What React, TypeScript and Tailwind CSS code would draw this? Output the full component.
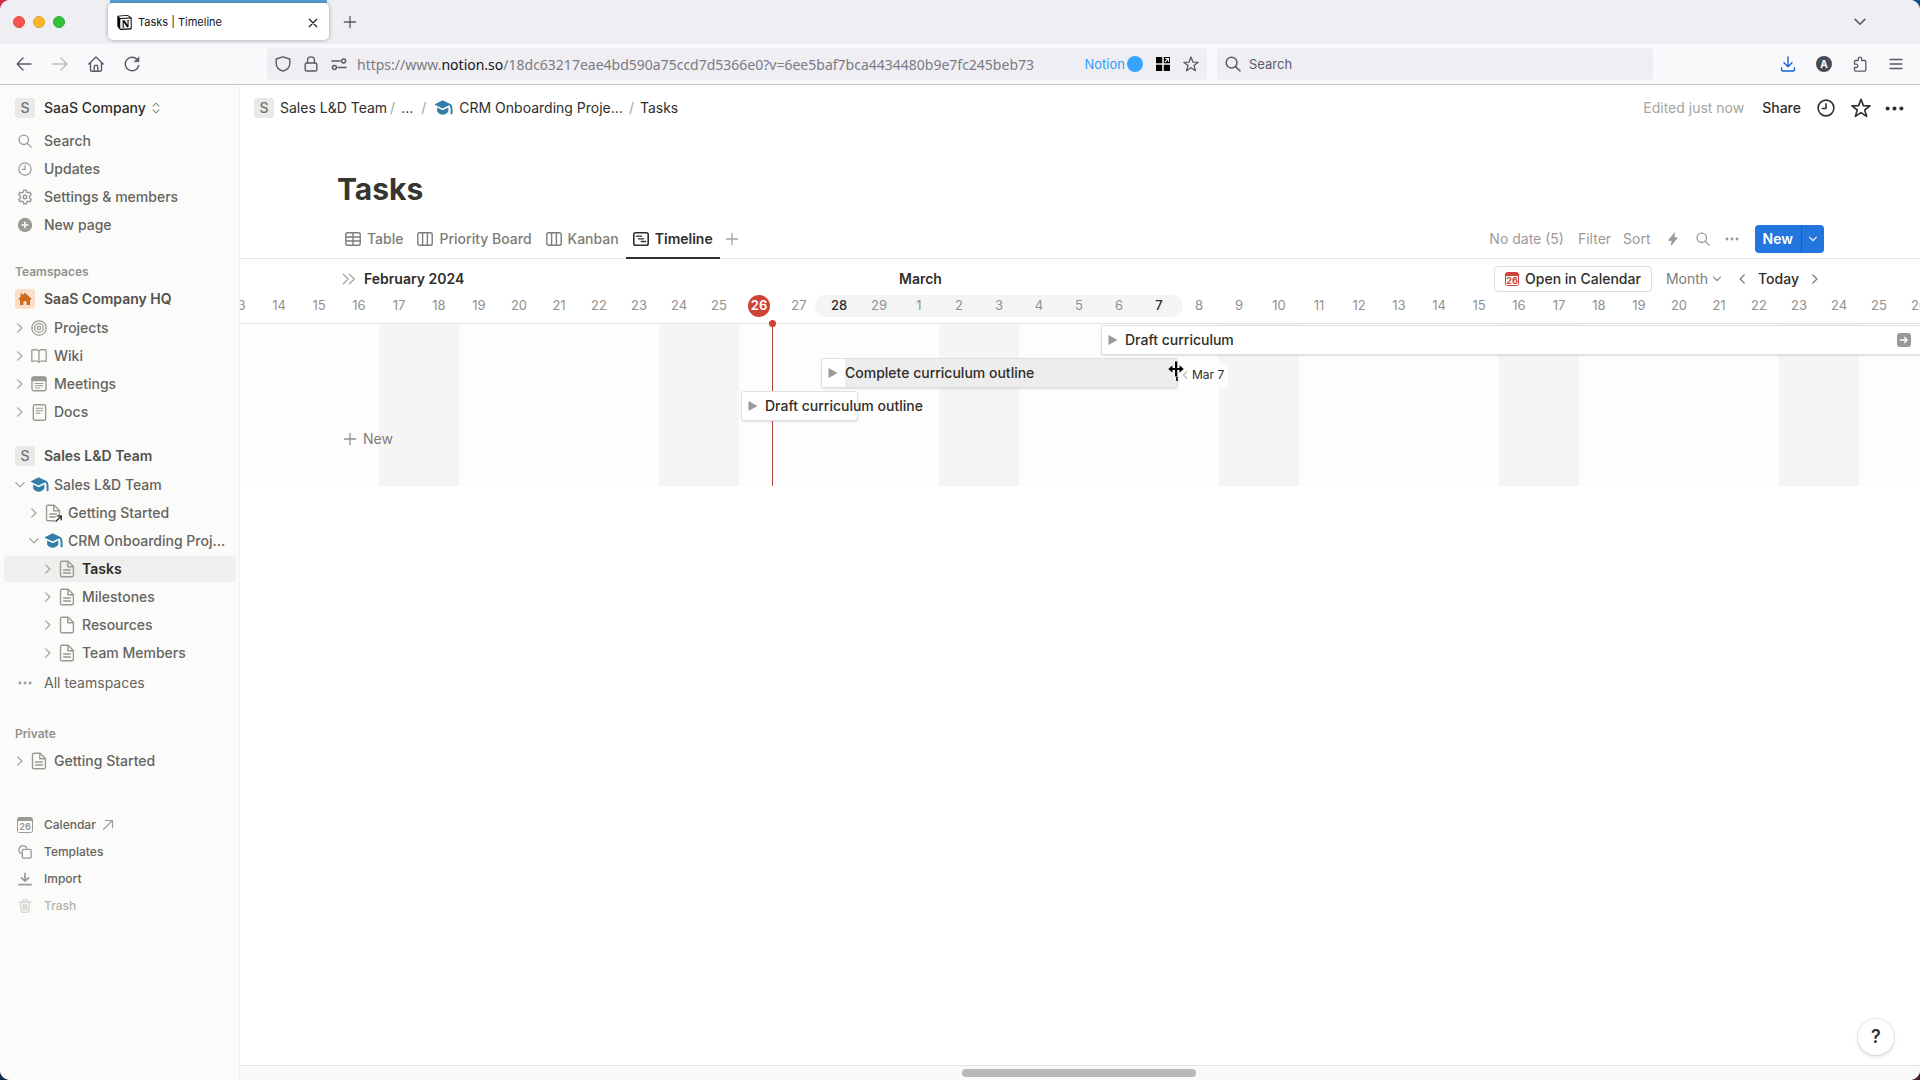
import type { ReactNode } from "react";
import clsx from "clsx";
import { SiNotion } from "react-icons/si";
import { IoFlash } from "react-icons/io5";

type IconProps = { className?: string };

function Svg({ className, box = 16, width = 1.3, children }: { className?: string; box?: number; width?: number; children: ReactNode }) {
  return (
    <svg
      className={clsx("shrink-0", className)}
      viewBox={`0 0 ${box} ${box}`}
      fill="none"
      stroke="currentColor"
      strokeWidth={width}
      strokeLinecap="round"
      strokeLinejoin="round"
      aria-hidden="true"
    >
      {children}
    </svg>
  );
}

const SearchIcon = ({ className }: IconProps) => (
  <Svg className={className} width={1.5}>
    <circle cx="6.6" cy="6.6" r="5.4" />
    <path d="M10.6 10.6 15 15" />
  </Svg>
);

const ClockIcon = ({ className }: IconProps) => (
  <Svg className={className} width={1.4}>
    <circle cx="8" cy="8" r="7" />
    <path d="M8 4.2V8.4H4.8" />
  </Svg>
);

const GearIcon = ({ className }: IconProps) => (
  <Svg className={className} width={1.4}>
    <path d="M6.7 1.2h2.6l.4 1.9 1.3.7 1.9-.6 1.3 2.2-1.5 1.4v2.4l1.5 1.4-1.3 2.2-1.9-.6-1.3.7-.4 1.9H6.7l-.4-1.9-1.3-.7-1.9.6-1.3-2.2 1.5-1.4V6.8L1.8 5.4l1.3-2.2 1.9.6 1.3-.7z" />
    <circle cx="8" cy="8" r="1.8" />
  </Svg>
);

const PlusCircleIcon = ({ className }: IconProps) => (
  <Svg className={className} width={1.6}>
    <circle cx="8" cy="8" r="7.2" fill="currentColor" stroke="none" />
    <path d="M8 5.2v5.6M5.2 8h5.6" stroke="#fbfbfa" />
  </Svg>
);

const ChevronRight = ({ className }: IconProps) => (
  <Svg className={className} width={1.8}>
    <path d="M5 2.5 10.5 8 5 13.5" />
  </Svg>
);

const ChevronLeft = ({ className }: IconProps) => (
  <Svg className={className} width={1.8}>
    <path d="M11 2.5 5.5 8 11 13.5" />
  </Svg>
);

const ChevronDown = ({ className }: IconProps) => (
  <Svg className={className} width={1.8}>
    <path d="M2.5 5 8 10.5 13.5 5" />
  </Svg>
);

const CapIcon = ({ className }: IconProps) => (
  <svg className={clsx("shrink-0", className)} viewBox="0 0 20 16" fill="#337ea9" aria-hidden="true">
    <path d="M9 .3.4 4.7 9 8.9l7-3.3c.9.7 1.5 2.2 1.5 4.4v4.3c0 .6.5.9 1 .9s1-.3 1-.9V10c0-2.4-.6-4.2-1.7-5.4z" />
    <path d="M3.3 7.8v4.4c1.2 2.1 3.4 3.4 5.9 3.4s4.7-1.3 5.9-3.4V7.8l-5.9 2.9z" />
  </svg>
);

const PageIcon = ({ className, lines = true, link = false }: IconProps & { lines?: boolean; link?: boolean }) => (
  <Svg className={className} box={18} width={1.4}>
    <path d="M4 1.2h6.2l5.2 5.2v8.9a1.5 1.5 0 0 1-1.5 1.5H4a1.5 1.5 0 0 1-1.5-1.5V2.7A1.5 1.5 0 0 1 4 1.2z" />
    <path d="M9.8 1.4v5.3h5.4" />
    {lines && <path d="M5.6 10h6.8M5.6 13h6.8" />}
    {link && (
      <>
        <path d="M11 18v-4l3-3h4v7z" fill="#fbfbfa" stroke="none" />
        <path d="M12 17.2l5-5M13.4 11.9h3.9v3.9" stroke="#37352f" />
      </>
    )}
  </Svg>
);

const TargetIcon = ({ className }: IconProps) => (
  <Svg className={className} width={1.3}>
    <circle cx="8" cy="8" r="7.2" />
    <circle cx="8" cy="8" r="4.4" />
    <circle cx="8" cy="8" r="1.6" />
  </Svg>
);

const BookIcon = ({ className }: IconProps) => (
  <Svg className={className} width={1.3}>
    <path d="M8 3C6.7 1.6 3.4 1.3.8 2.2v11.3c2.6-.8 5.9-.5 7.2.9 1.3-1.4 4.6-1.7 7.2-.9V2.2C12.6 1.3 9.3 1.6 8 3zM8 3v11.2" />
  </Svg>
);

const MeetingIcon = ({ className }: IconProps) => (
  <Svg className={className} width={1.4}>
    <rect x="1" y="1.2" width="14" height="13.6" rx="2" />
    <path d="M1 3a2 2 0 0 1 2-2h10a2 2 0 0 1 2 2v1.5H1z" fill="currentColor" />
    <path d="M4 7.5h8M4 9.7h8M4 12h5" strokeWidth="1" />
  </Svg>
);

const DocIcon = ({ className }: IconProps) => (
  <Svg className={className} width={1.3}>
    <rect x="2.2" y=".7" width="11.6" height="14.6" rx="1.5" />
    <path d="M4.8 4h6.4M4.8 6.3h6.4M4.8 8.6h3.6" strokeWidth="1" />
  </Svg>
);

const HouseIcon = ({ className }: IconProps) => (
  <svg className={className} viewBox="0 0 14 14" fill="#d0691a" aria-hidden="true">
    <path d="M7 .7l6.7 6.2-.9 1-.8-.7V13H8.6V9.2H5.4V13H2V7.2l-.8.7-.9-1 2.3-2.2V1.5h1.7v1.7z" />
  </svg>
);

const BoardIcon = ({ className }: IconProps) => (
  <Svg className={className} width={1.4}>
    <rect x=".8" y="1.8" width="14.4" height="12.4" rx="1.8" />
    <path d="M5.6 2v12M10.4 2v12" />
  </Svg>
);

const TableIcon = ({ className }: IconProps) => (
  <Svg className={className} width={1.4}>
    <rect x=".8" y="1.8" width="14.4" height="12.4" rx="1.8" />
    <path d="M1 6h14M1 10h14M8 2v12" />
  </Svg>
);

const TimelineIcon = ({ className }: IconProps) => (
  <Svg className={className} width={1.6}>
    <rect x=".8" y="1.8" width="14.4" height="12.4" rx="1.8" />
    <path d="M3.4 5.2h5.2M5.4 7.8h5.2M8.2 10.5h4.4" strokeWidth="1.3" />
  </Svg>
);

const StarIcon = ({ className }: IconProps) => (
  <Svg className={className} width={1.3}>
    <path d="M8 1l1.9 5.1 5.3.2L11 9.6l1.5 5.1-4.5-3-4.5 3L5 9.6.8 6.3l5.3-.2z" />
  </Svg>
);

const PlusIcon = ({ className }: IconProps) => (
  <Svg className={className} width={1.5}>
    <path d="M8 1.5v13M1.5 8h13" />
  </Svg>
);

const DotsIcon = ({ className }: IconProps) => (
  <svg className={clsx("shrink-0", className)} viewBox="0 0 16 16" fill="currentColor" aria-hidden="true">
    <circle cx="2.2" cy="8" r="1.7" />
    <circle cx="8" cy="8" r="1.7" />
    <circle cx="13.8" cy="8" r="1.7" />
  </svg>
);

function CalendarBadge({ className }: IconProps) {
  return (
    <span className={clsx("flex shrink-0 flex-col rounded-[3px] px-px pb-px pt-1", className)}>
      <span className="flex flex-1 items-center justify-center rounded-[1px] bg-white text-[9px] leading-none font-bold">26</span>
    </span>
  );
}

function Letter() {
  return (
    <span className="flex size-5 shrink-0 items-center justify-center rounded-[3px] bg-[#e9e9e8] text-sm font-medium text-[#73726e]">S</span>
  );
}

function TabStrip() {
  return (
    <div className="flex h-11 shrink-0 items-center bg-[#efeef3] pr-[53px] pl-[13px]">
      <div className="flex gap-2">
        <button aria-label="Close window" className="size-3 rounded-full border border-[#e2463f] bg-[#f9544d]" />
        <button aria-label="Minimise window" className="size-3 rounded-full border border-[#e1a12b] bg-[#fdb32b]" />
        <button aria-label="Zoom window" className="size-3 rounded-full border border-[#2bab30] bg-[#32c138]" />
      </div>
      <div className="ml-[43px] flex h-11 w-[221px] flex-col">
        <div className="mx-0.5 h-[3px] shrink-0 bg-[#5aa5d9]" />
        <div className="flex h-[37px] items-center rounded-[5px] bg-white px-[9px] pt-0.5 text-[#15141a] shadow-[0_0_4px_rgba(0,0,0,0.35)]">
          <SiNotion className="size-[15px] text-black" />
          <span className="ml-1.5 text-[11px]">Tasks | Timeline</span>
          <button aria-label="Close tab" className="ml-auto p-px">
            <Svg className="size-3" width={1.5}>
              <path d="M3 3l10 10M13 3 3 13" />
            </Svg>
          </button>
        </div>
      </div>
      <button aria-label="New tab" className="ml-[14px] text-[#5b5b66]">
        <PlusIcon className="size-3.5" />
      </button>
      <button aria-label="List all tabs" className="ml-auto text-[#5b5b66]">
        <ChevronDown className="size-3.5" />
      </button>
    </div>
  );
}

const address = {
  prefix: "https://www.",
  host: "notion.so",
  path: "/18dc63217eae4bd590a75ccd7d5366e0?v=6ee5baf7bca4434480b9e7fc245beb73"
};

function AddressBar() {
  return (
    <div className="flex h-8 min-w-0 flex-11 items-center rounded bg-[#efeef3] px-2">
      <Svg className="size-4" width={1.4}>
        <path d="M8 .9 14.8 3v4.5c0 3.5-2.7 6.3-6.8 7.7-4.1-1.400-6.800-4.200-6.800-7.700V3z" />
      </Svg>
      <Svg className="ml-3 size-4" width={1.4}>
        <rect x="2.2" y="7" width="11.6" height="8" rx="1.6" />
        <path d="M4.6 7V4.300a3.400 3.400 0 0 1 6.800 0V7" />
      </Svg>
      <Svg className="ml-3 size-4" width={1.5}>
        <path d="M1 5h8M7 11.5h8" />
        <circle cx="12.6" cy="5" r="2" />
        <circle cx="3.4" cy="11.5" r="2" />
      </Svg>
      {/* the input is transparent so the host can be drawn darker than the rest */}
      <div className="relative ml-2.5 min-w-0 flex-1 pt-px font-['Noto_Sans',sans-serif] text-sm text-[#7b7b84]">
        <input
          aria-label="Address"
          className="absolute inset-0 w-full text-transparent caret-[#15141a] outline-none"
          defaultValue={address.prefix + address.host + address.path}
        />
        <p aria-hidden="true" className="pointer-events-none truncate">
          {address.prefix}
          <span className="text-[#15141a]">{address.host}</span>
          {address.path}
        </p>
      </div>
      <span className="pt-px text-[13px] text-[#2e9dfb]">Notion</span>
      <span className="ml-0.5 size-4 shrink-0 rounded-full bg-[#37a5ff]" />
      <svg className="ml-3 size-4 shrink-0" viewBox="0 0 16 16" aria-hidden="true">
        <path d="M1 1h6.2v6.2H1zM1 8.8h6.2V15H1zM8.8 8.8H15V15H8.8zM8.8 1H15v6.2H8.8z" />
        <path d="M9.8 6.2l3.5-3.5M10.3 2.5h3.2v3.2" stroke="#efeef3" strokeWidth="1.2" fill="none" />
      </svg>
      <button aria-label="Bookmark" className="ml-3">
        <StarIcon className="size-4" />
      </button>
    </div>
  );
}

function Toolbar() {
  return (
    <div className="flex h-[41px] shrink-0 items-center border-b border-[#c4c4c9] bg-[#f9f9fb] text-[#5b5b66]">
      <div className="flex w-[267px] items-center gap-5 pl-4">
        <button aria-label="Back">
          <Svg className="size-4" width={1.4}>
            <path d="M15 8H1.2M7 2 1.2 8 7 14" />
          </Svg>
        </button>
        <button aria-label="Forward" className="text-[#bcbcc2]">
          <Svg className="size-4" width={1.4}>
            <path d="M1 8h13.8M9 2l5.8 6L9 14" />
          </Svg>
        </button>
        <button aria-label="Home">
          <Svg className="size-4" width={1.4}>
            <path d="M.8 8 8 1l7.2 7M2.5 6.6V14a1.2 1.2 0 0 0 1.2 1.2h8.6a1.2 1.2 0 0 0 1.2-1.2V6.6M6.2 15v-4a1.8 1.8 0 0 1 3.6 0v4" />
          </Svg>
        </button>
        <button aria-label="Reload">
          <Svg className="size-4" width={1.4}>
            <path d="M14.7 9.5A6.8 6.8 0 1 1 13 3.3" />
            <path d="M15 1v4.8h-4.8z" fill="currentColor" strokeWidth=".5" />
          </Svg>
        </button>
      </div>
      <AddressBar />
      <label className="ml-2.5 flex h-8 flex-5 items-center gap-2 rounded bg-[#efeef3] px-2">
        <SearchIcon className="size-4" />
        <input aria-label="Search the web" placeholder="Search" className="w-full pt-px text-[13px] outline-none placeholder:text-[#5b5b66]" />
      </label>
      <div className="flex w-[267px] items-center justify-end gap-5 pr-4">
        <button aria-label="Downloads" className="text-[#1565d8]">
          <Svg className="size-4" width={1.4}>
            <path d="M8 1v9.5M4 6.8l4 4 4-4M1.5 12v1.5A1.5 1.5 0 0 0 3 15h10a1.5 1.5 0 0 0 1.5-1.5V12" />
          </Svg>
        </button>
        <button aria-label="Account" className="flex size-4 items-center justify-center rounded-full bg-[#4b4b55] text-[10px] font-bold text-white">
          A
        </button>
        <button aria-label="Extensions">
          <Svg className="size-4" width={1.3}>
            <path d="M6.2 4.5V2.8a1.7 1.7 0 0 1 3.4 0v1.7h3.2a1 1 0 0 1 1 1v8.6a1 1 0 0 1-1 1H3.5a1 1 0 0 1-1-1v-2.6h1.700a1.700 1.700 0 0 0 0-3.400H2.500V5.500a1 1 0 0 1 1-1z" />
          </Svg>
        </button>
        <button aria-label="Menu">
          <Svg className="size-4" width={1.3}>
            <path d="M2 3.5h12M2 8h12M2 12.5h12" />
          </Svg>
        </button>
      </div>
    </div>
  );
}

function MenuRow({ icon, children, small, muted }: { icon: ReactNode; children: ReactNode; small?: boolean; muted?: boolean }) {
  return (
    <a
      href="#"
      className={clsx(
        "flex items-center pl-[15px] font-medium",
        small ? "h-[27px] text-xs" : "h-7 text-sm",
        muted ? "text-[#b4b3b0]" : "text-[#65645f]"
      )}
    >
      <span className={clsx("flex w-5 shrink-0 justify-center", muted ? "text-[#cfceca]" : "text-[#9b9a97]")}>{icon}</span>
      <span className="ml-[9px] flex items-center">{children}</span>
    </a>
  );
}

const indents = ["pl-2", "pl-[22px]", "pl-9"];

function TreeRow({ icon, label, level = 0, open, active }: { icon: ReactNode; label: string; level?: number; open?: boolean; active?: boolean }) {
  const Chevron = open ? ChevronDown : ChevronRight;
  return (
    <div className="pr-[3px] pl-1 py-px">
      <a
        href="#"
        className={clsx(
          "flex h-[26px] items-center rounded text-sm",
          indents[level],
          active ? "bg-[#efefee] font-semibold text-[#2b2a26]" : "font-medium text-[#65645f]"
        )}
      >
        <span className="flex w-4 shrink-0 justify-center text-[#a9a8a5]">
          <Chevron className="size-3" />
        </span>
        <span className="mr-1.5 ml-0.5 flex w-[18px] shrink-0 justify-center text-[#9b9a94]">{icon}</span>
        <span className="truncate">{label}</span>
      </a>
    </div>
  );
}

function SpaceHeading({ icon, label }: { icon: ReactNode; label: string }) {
  return (
    <div className="flex h-[30px] items-center gap-[9px] pl-[15px] text-sm font-semibold text-[#52514c]">
      {icon}
      {label}
    </div>
  );
}

function Sidebar() {
  return (
    <nav className="flex w-60 shrink-0 flex-col border-r border-[#f1f1ef] bg-[#fbfbfa]">
      <button className="flex h-[46px] items-center gap-[9px] pl-[15px] text-sm font-medium text-[#2f2e2a]">
        <Letter />
        <span className="flex items-center gap-1">
          SaaS Company
          <Svg className="size-3 text-[#91918e]" width={1.5}>
            <path d="M4 5.5l4-4 4 4M4 10.5l4 4 4-4" />
          </Svg>
        </span>
      </button>
      <div className="-mt-1">
        <MenuRow icon={<SearchIcon className="size-3.5" />}>Search</MenuRow>
        <MenuRow icon={<ClockIcon className="size-3.5" />}>Updates</MenuRow>
        <MenuRow icon={<GearIcon className="size-4" />}>Settings &amp; members</MenuRow>
        <MenuRow icon={<PlusCircleIcon className="size-4" />}>New page</MenuRow>
      </div>

      <h2 className="mt-6 pl-[15px] text-xs leading-[18px] font-semibold text-[#91918e]">Teamspaces</h2>
      <div className="mt-[3px]">
        <SpaceHeading
          icon={
            <span className="flex size-5 items-center justify-center rounded-[3px] bg-[#fadec9]">
              <HouseIcon className="size-3.5" />
            </span>
          }
          label="SaaS Company HQ"
        />
        <TreeRow icon={<TargetIcon className="size-4" />} label="Projects" />
        <TreeRow icon={<BookIcon className="size-4" />} label="Wiki" />
        <TreeRow icon={<MeetingIcon className="size-4" />} label="Meetings" />
        <TreeRow icon={<DocIcon className="size-[17px]" />} label="Docs" />
      </div>

      <div className="mt-[15px]">
        <SpaceHeading icon={<Letter />} label="Sales L&D Team" />
        <TreeRow icon={<CapIcon className="w-[19px]" />} label="Sales L&D Team" open />
        <TreeRow icon={<PageIcon className="size-[18px]" link />} label="Getting Started" level={1} />
        <TreeRow icon={<CapIcon className="w-[19px]" />} label="CRM Onboarding Proj..." level={1} open />
        <TreeRow icon={<PageIcon className="size-[18px]" />} label="Tasks" level={2} active />
        <TreeRow icon={<PageIcon className="size-[18px]" />} label="Milestones" level={2} />
        <TreeRow icon={<PageIcon className="size-[18px]" lines={false} />} label="Resources" level={2} />
        <TreeRow icon={<PageIcon className="size-[18px]" />} label="Team Members" level={2} />
        <div className="mt-0.5">
          <MenuRow icon={<DotsIcon className="size-3.5" />}>
            <span className="font-normal">All teamspaces</span>
          </MenuRow>
        </div>
      </div>

      <h2 className="mt-7 pl-[15px] text-xs leading-[18px] font-semibold text-[#91918e]">Private</h2>
      <div className="mt-1">
        <TreeRow icon={<PageIcon className="size-[18px]" />} label="Getting Started" />
      </div>

      <div className="mt-9">
        <MenuRow small icon={<CalendarBadge className="size-4 bg-[#9b9a97]" />}>
          Calendar
          <Svg className="ml-1.5 size-3 text-[#9b9a97]" width={1.5}>
            <path d="M2 14 14 2M4.5 2H14v9.5" />
          </Svg>
        </MenuRow>
        <MenuRow
          small
          icon={
            <Svg className="size-3.5" width={1.5}>
              <rect x="5" y="5" width="10" height="10" rx="1.5" />
              <path d="M3.8 9.8A4.7 4.7 0 1 1 10 3.500" />
            </Svg>
          }
        >
          Templates
        </MenuRow>
        <MenuRow
          small
          icon={
            <Svg className="size-3.5" width={2}>
              <path d="M8 1.5V10M4 6.6l4 3.9 4-3.9M1 14.5h14" />
            </Svg>
          }
        >
          Import
        </MenuRow>
        <MenuRow
          small
          muted
          icon={
            <Svg className="size-3.5" width={1.3}>
              <path d="M1.5 3.5h13M5.5 3.2V1.8a1 1 0 0 1 1-1h3a1 1 0 0 1 1 1v1.4M3 3.8l.7 10a1.4 1.4 0 0 0 1.4 1.4h5.8a1.4 1.4 0 0 0 1.4-1.4l.7-10M6 6v6.8M8 6v6.8M10 6v6.8" />
            </Svg>
          }
        >
          Trash
        </MenuRow>
      </div>
    </nav>
  );
}

function Breadcrumbs() {
  return (
    <header className="flex h-[46px] shrink-0 items-center pr-4 pl-3.5 text-sm text-[#2f2e2a]">
      <Letter />
      <a href="#" className="ml-1.5">Sales L&amp;D Team</a>
      <span className="ml-[3px] text-[#a5a4a1]">/</span>
      <a href="#" className="ml-1.5">...</a>
      <span className="ml-2 text-[#a5a4a1]">/</span>
      <a href="#" className="ml-2 flex items-center gap-1.5">
        <CapIcon className="w-[19px]" />
        CRM Onboarding Proje...
      </a>
      <span className="mx-1.5 text-[#a5a4a1]">/</span>
      <a href="#">Tasks</a>
      <span className="ml-auto text-[#a5a4a1]">Edited just now</span>
      <button className="ml-[18px] font-medium">Share</button>
      <button aria-label="Updates" className="ml-4">
        <ClockIcon className="size-[18px]" />
      </button>
      <button aria-label="Favorite" className="ml-4">
        <StarIcon className="size-5" />
      </button>
      <button aria-label="More" className="ml-3.5">
        <DotsIcon className="size-[19px]" />
      </button>
    </header>
  );
}

const views = [
  { name: "Table", icon: TableIcon },
  { name: "Priority Board", icon: BoardIcon },
  { name: "Kanban", icon: BoardIcon },
  { name: "Timeline", icon: TimelineIcon }
];

function ViewBar() {
  return (
    <div className="flex h-10 items-center border-b border-[#e9e9e7] pr-24 pl-[98px] text-sm">
      <div className="flex h-full">
        {views.map(({ name, icon: Icon }) => (
          <button
            key={name}
            className={clsx(
              "-mb-px flex items-center gap-1.5 border-b-2 px-[7px] pt-0.5",
              name === "Timeline" ? "border-[#2f2e2a] font-semibold text-[#2f2e2a]" : "border-transparent font-medium text-[#7d7c78]"
            )}
          >
            <Icon className="size-4" />
            {name}
          </button>
        ))}
      </div>
      <button aria-label="Add view" className="ml-[5px] text-[#a5a4a1]">
        <PlusIcon className="size-3.5" />
      </button>
      <div className="ml-auto flex items-center text-[#9b9a97]">
        <button>No date (5)</button>
        <button className="ml-3.5">Filter</button>
        <button className="ml-3">Sort</button>
        <button aria-label="Automations" className="ml-[15px]">
          <IoFlash className="size-3.5" />
        </button>
        <button aria-label="Search" className="ml-4">
          <SearchIcon className="size-3.5" />
        </button>
        <button aria-label="View options" className="ml-[15px]">
          <DotsIcon className="size-3.5" />
        </button>
        <div className="ml-4 flex h-7 overflow-hidden rounded bg-[#2376de] text-white">
          <button className="px-2 font-semibold">New</button>
          <button aria-label="New options" className="border-l border-[#1c62bd] px-1.5">
            <ChevronDown className="size-2.5" />
          </button>
        </div>
      </div>
    </div>
  );
}

// 13 Feb to 26 Mar, one 40px column each
const days = Array.from({ length: 43 }, (_, i) => (i < 17 ? i + 13 : i - 16));
const rangeStart = 15;
const rangeEnd = 23;

function Dates() {
  return (
    <div className="flex h-[29px] overflow-hidden pb-[5px]">
      <div className="-ml-[21px] flex items-center">
        {days.map((day, i) => (
          <div
            key={i}
            className={clsx(
              "flex h-[22px] shrink-0 items-center justify-center text-[13px]",
              i >= rangeStart && i <= rangeEnd && "bg-[#f4f4f4]",
              i === rangeStart && "-ml-1 w-11 rounded-l-full pl-1",
              i === rangeEnd && "-mr-1 w-11 rounded-r-full pr-1",
              i === rangeStart || i === rangeEnd ? "font-medium text-[#2f2e2a]" : "w-10 text-[#91918e]"
            )}
          >
            {i === 13 ? (
              <span className="flex size-[22px] items-center justify-center rounded-full bg-[#cd4337] font-semibold text-white">{day}</span>
            ) : (
              day
            )}
          </div>
        ))}
      </div>
    </div>
  );
}

function TimelineHeader() {
  return (
    <div className="relative flex h-[35px] items-center pt-[5px] pr-[99px] pl-[102px] text-sm">
      <button aria-label="Show table" className="text-[#a5a4a1]">
        <Svg className="size-3.5" width={1.5}>
          <path d="M1.5 2.5 7 8l-5.5 5.5M8.5 2.5 14 8l-5.5 5.5" />
        </Svg>
      </button>
      <span className="ml-2 font-semibold text-[#2f2e2a]">February 2024</span>
      <span className="absolute left-[659px] font-semibold text-[#2f2e2a]">March</span>
      <div className="ml-auto flex items-center text-[#2f2e2a]">
        <button className="flex h-[26px] items-center gap-1.5 rounded border border-[#dcdcda] px-2.5 font-medium">
          <CalendarBadge className="size-3.5 bg-[#cd4337] text-[#cd4337]" />
          Open in Calendar
        </button>
        <button className="ml-3.5 flex items-center gap-1 text-[#7d7c78]">
          Month
          <ChevronDown className="size-2.5" />
        </button>
        <button aria-label="Previous" className="ml-3.5 text-[#7d7c78]">
          <ChevronLeft className="size-3" />
        </button>
        <button className="mx-2.5 font-medium">Today</button>
        <button aria-label="Next" className="text-[#7d7c78]">
          <ChevronRight className="size-3" />
        </button>
      </div>
    </div>
  );
}

const barBase = "absolute flex h-[30px] items-center rounded-[3px] border border-[#e0e0de] shadow-[0_1px_2px_rgba(0,0,0,0.12)]";

function BarLabel({ children }: { children: ReactNode }) {
  return (
    <span className="flex items-center gap-[7px] pl-1.5 text-sm font-medium whitespace-nowrap text-[#2f2e2a]">
      <svg className="size-2.5 text-[#9b9a97]" viewBox="0 0 10 10" fill="currentColor" aria-hidden="true">
        <path d="M.5 0v10l9-5z" />
      </svg>
      {children}
    </span>
  );
}

function Grid() {
  return (
    <div className="relative border-t border-[#e3e3e1]">
      <div className="flex h-[162px] overflow-hidden bg-[#fdfdfd]">
        <div className="-ml-[21px] flex">
          {days.map((_, i) => (
            <div key={i} className={clsx("w-10 shrink-0", (i % 7 === 4 || i % 7 === 5) && "bg-[#f5f5f5]")} />
          ))}
        </div>
      </div>
      <div className="absolute top-0 left-[532px] h-full w-px bg-[#b5443b]" />
      <div className="absolute -top-1 left-[529px] size-[7px] rounded-full bg-[#cd4337]" />

      <div className={clsx(barBase, "top-px right-0 left-[861px] rounded-r-none border-r-0 bg-white")}>
        <BarLabel>Draft curriculum</BarLabel>
        <button aria-label="Scroll to end" className="mr-[9px] ml-auto flex size-3.5 items-center justify-center rounded-[3px] bg-[#999896] text-white">
          <Svg className="size-2.5" width={2.2}>
            <path d="M2 8h11M9 4l4 4-4 4" />
          </Svg>
        </button>
      </div>
      <div className={clsx(barBase, "top-[34px] left-[581px] w-[357px] bg-linear-to-r from-white from-[23px] to-[#ededed] to-[23px]")}>
        <BarLabel>Complete curriculum outline</BarLabel>
      </div>
      <div className={clsx(barBase, "top-[67px] left-[501px] w-[117px] bg-white")}>
        <BarLabel>Draft curriculum outline</BarLabel>
      </div>

      <div className="absolute top-[39px] left-[940px] flex h-6 items-center gap-0.5 rounded bg-white/80 pr-1 text-xs text-[#2f2e2a]">
        <ChevronLeft className="size-2.5 text-[#b4b3b0]" />
        Mar 7
      </div>
      <div className="absolute top-[37px] left-[936px] h-5 w-0.5 bg-[#2f2e2a]" />
      <svg className="absolute top-9 left-[927px] size-[18px]" viewBox="0 0 18 18" aria-hidden="true">
        <path
          d="M8 1.5h2V8h2.5V5.2L16.8 9l-4.3 3.8V10H10v6.5H8V10H5.5v2.8L1.2 9l4.3-3.8V8H8z"
          fill="#000"
          stroke="#fff"
          strokeWidth="1.2"
          paintOrder="stroke"
        />
      </svg>

      <button className="absolute top-[105px] left-[103px] flex items-center gap-1.5 text-sm text-[#7d7c78]">
        <PlusIcon className="size-3.5 text-[#91918e]" />
        New
      </button>
    </div>
  );
}

export default function App() {
  return (
    <div className="bg-[linear-gradient(100deg,#c9304a_0%,#c9304a_30%,#10528c_60%)] font-[Inter,'Liberation_Sans',sans-serif]">
      <div className="bg-[linear-gradient(to_right,#12284c_50%,#4a1a38_50%)] bg-[length:100%_50%] bg-bottom bg-no-repeat">
        <div className="flex h-screen flex-col overflow-hidden rounded-[10px] bg-white antialiased">
          <TabStrip />
          <Toolbar />
          <div className="flex min-h-0 flex-1">
            <Sidebar />
            <div className="flex min-w-0 flex-1 flex-col">
              <Breadcrumbs />
              <main className="relative min-h-0 flex-1">
                <h1 className="pt-[38px] pb-2.5 pl-[97px] text-[30px] leading-10 font-bold text-[#37352f]">Tasks</h1>
                <ViewBar />
                <TimelineHeader />
                <Dates />
                <Grid />
                <button
                  aria-label="Help"
                  className="absolute right-[26px] bottom-2.5 flex size-9 items-center justify-center rounded-full bg-white text-lg font-semibold text-[#2f2e2a] shadow-[0_0_1px_1px_rgba(0,0,0,0.08),0_2px_4px_rgba(0,0,0,0.12)]"
                >
                  ?
                </button>
              </main>
              <div className="flex h-[15px] shrink-0 items-center border-t border-[#e3e3e3] bg-[#fafafa]">
                <div className="ml-[43%] h-2 w-[234px] rounded-full bg-[#b9b9b9]" />
              </div>
            </div>
          </div>
        </div>
      </div>
    </div>
  );
}
